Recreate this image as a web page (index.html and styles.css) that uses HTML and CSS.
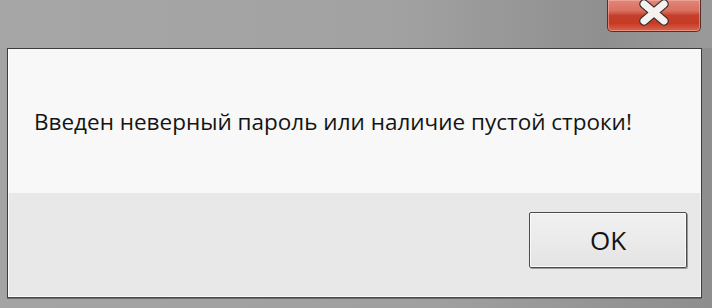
FILE: index.html
```html
<!DOCTYPE html>
<html lang="ru">
<head>
<meta charset="utf-8">
<link rel="stylesheet" href="styles.css">
</head>
<body>
<div class="window">
  <div class="titlebar">
    <button class="close" aria-label="Закрыть">
      <svg width="40" height="26" viewBox="0 0 40 26">
        <path d="M10 4 L30 21 M30 4 L10 21" stroke="#3a2a28" stroke-width="9.5" stroke-linecap="round"/>
        <path d="M10 4 L30 21 M30 4 L10 21" stroke="#f4f1ee" stroke-width="7" stroke-linecap="round"/>
      </svg>
    </button>
  </div>
  <div class="client">
    <div class="content">
      <p class="message">Введен неверный пароль или наличие пустой строки!</p>
    </div>
    <div class="footer">
      <button class="ok">OK</button>
    </div>
  </div>
</div>
</body>
</html>
```

FILE: styles.css
```css
html, body {
  margin: 0;
  padding: 0;
}
body {
  width: 712px;
  height: 308px;
  overflow: hidden;
  font-family: "Open Sans", "Noto Sans", sans-serif;
}
.window {
  width: 712px;
  height: 308px;
  display: flex;
  flex-direction: column;
  background: linear-gradient(90deg, #a4a4a4 0%, #a0a0a0 60%, #8e8e8e 100%);
}
.titlebar {
  height: 48px;
  flex: none;
  display: flex;
  justify-content: flex-end;
  align-items: flex-start;
  padding-right: 11px;
  background: linear-gradient(90deg, #a6a6a6 0%, #a2a2a2 55%, #8f8f8f 85%, #9a9a9a 100%);
}
.close {
  width: 94px;
  height: 32px;
  margin: 0;
  padding: 0;
  border: 1px solid #5a2e28;
  border-top: none;
  border-radius: 0 0 5px 5px;
  background: linear-gradient(180deg, #e0877a 0%, #d9705f 35%, #c4402c 50%, #c73a25 75%, #d9664f 100%);
  box-shadow: inset 0 0 0 1px rgba(255, 200, 190, 0.45);
  display: flex;
  align-items: center;
  justify-content: center;
}
.close svg {
  display: block;
  margin-top: -5px;
}
.client {
  flex: none;
  height: 248px;
  margin: 0 10px 0 7px;
  border: 1px solid #3c3c3c;
  border-bottom-color: #4a4a4a;
  display: flex;
  flex-direction: column;
  box-shadow: 0 1px 0 #6a6a6a;
}
.content {
  height: 144px;
  flex: none;
  background: #f8f8f8;
  padding-left: 25px;
  border-left: 1px solid #ffffff;
}
.message {
  margin: 0;
  padding-top: 59px;
  font-size: 22.5px;
  line-height: 28px;
  color: #141414;
  white-space: nowrap;
}
.footer {
  flex: 1;
  background: #e8e8e8;
  border-bottom: 1px solid #fafafa;
  border-left: 1px solid #fafafa;
  border-right: 1px solid #fafafa;
  display: flex;
  justify-content: flex-end;
  align-items: flex-start;
  padding: 19px 13px 0 0;
}
.ok {
  width: 158px;
  height: 56px;
  margin: 0;
  padding: 0;
  border: 1px solid #4b4b4b;
  border-radius: 2px;
  background: linear-gradient(180deg, #f0f0f0 0%, #ebebeb 50%, #e3e3e3 100%);
  box-shadow: inset 0 0 0 1px #fbfbfb, 1px 1px 0 #9a9a9a;
  font-family: "Open Sans", "Noto Sans", sans-serif;
  font-size: 26px;
  color: #141414;
}
```
